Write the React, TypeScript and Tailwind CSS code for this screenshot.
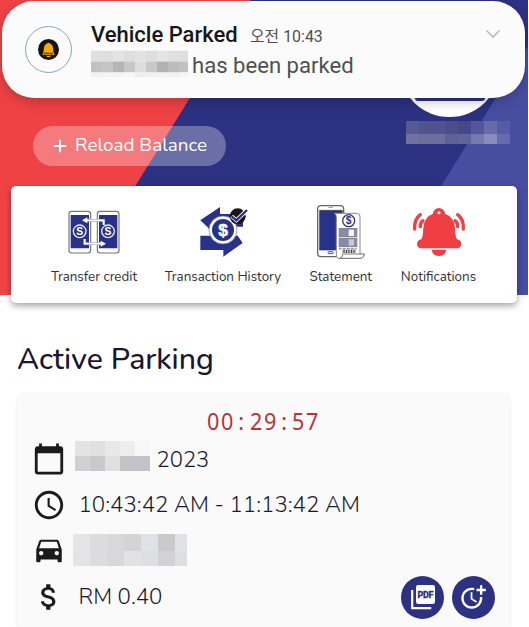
import type { ReactNode } from 'react';
import { MdAttachMoney, MdCalendarToday, MdDriveEta, MdMoreTime, MdSchedule } from 'react-icons/md';

function TransferIcon() {
  return (
    <svg width="52" height="44" viewBox="83 45 156 132" fill="none">
      <rect x="86" y="49" width="65" height="125" rx="8" fill="#fff" stroke="#777" strokeWidth="3.5" />
      <rect x="171" y="49" width="65" height="125" rx="8" fill="#fff" stroke="#777" strokeWidth="3.5" />
      <path d="M91 60h55v100H91zM176 60h55v100h-55z" fill="#29328a" />
      <g stroke="#e8eaf6" strokeWidth="4" fill="#29328a">
        <circle cx="118" cy="109" r="19" />
        <circle cx="203" cy="109" r="19" />
      </g>
      <g fill="#fff" fontFamily="Liberation Sans" fontWeight="700" fontSize="31" textAnchor="middle">
        <text x="118" y="120">S</text>
        <text x="203" y="120">S</text>
      </g>
      <path d="M190 90V76H136M133 132v14h54" stroke="#8d92bd" strokeWidth="8" />
      <path d="M190 90V76H136M133 132v14h54" stroke="#fff" strokeWidth="5" />
      <path d="M125 76l16-9v18zM197 146l-16-9v18z" fill="#fff" />
    </svg>
  );
}

function HistoryIcon() {
  return (
    <svg className="translate-x-px" width="50" height="52" viewBox="120 34 150 156" fill="none">
      <path d="M124 77L183 37v21h69v38h-35l-50 22z" fill="#29328a" />
      <path d="M124 77h23v24h16V60z" fill="#29328a" />
      <path d="M124 123h112l15 22-58 41v-20h-69z" fill="#29328a" />
      <circle cx="192" cy="106" r="42" fill="#fff" stroke="#6b70a8" strokeWidth="2" />
      <circle cx="192" cy="106" r="33" fill="#29328a" />
      <text x="192" y="124" fill="#fff" stroke="#fff" strokeWidth="1.500" fontFamily="Liberation Sans" fontWeight="700" fontSize="52" textAnchor="middle">$</text>
      <circle cx="236" cy="65" r="24" fill="#171717" />
      <path d="M218 65l14 12 32-31" stroke="#fff" strokeWidth="12" />
      <path d="M218 65l14 12 32-31" stroke="#29328a" strokeWidth="7" />
    </svg>
  );
}

function StatementIcon() {
  return (
    <svg width="50" height="56" viewBox="79 27 150 168" fill="none">
      <rect x="84" y="32" width="78" height="153" rx="10" fill="#fff" stroke="#666" strokeWidth="4" />
      <path d="M90 46h68v119H90z" fill="#29328a" stroke="#333" strokeWidth="2" />
      <path d="M116 37h14" stroke="#999" strokeWidth="3" />
      <rect x="115" y="170" width="16" height="6" rx="3" stroke="#555" strokeWidth="3" />
      <path d="M133 55h70q8 1 8 10v113h13q-2 12-13 12h-65q-8-2-6-16V65q0-8-7-10z" fill="#fff" stroke="#888" strokeWidth="3" />
      <circle cx="177" cy="77" r="18" stroke="#29328a" strokeWidth="4" />
      <text x="177" y="88" fill="#29328a" fontFamily="Liberation Sans" fontWeight="700" fontSize="31" textAnchor="middle">$</text>
      <path d="M147 101h56v23h-56zM147 131h56v23h-56z" fill="#858aae" />
      <path d="M147 101h56M147 125h56M147 130h56M147 154h56" stroke="#777" strokeWidth="3" />
      <path d="M177 104h16v19h-16z" fill="#f5f5f5" />
      <path d="M177 133h16v19h-16z" fill="#c7cada" />
      <path d="M147 161h54" stroke="#999" strokeWidth="5" strokeDasharray="9 3" />
      <path d="M159 169h39" stroke="#444" strokeWidth="10" strokeDasharray="3 2" />
      <path d="M159 177h65q-2 13-13 13h-61q10-1 9-13z" fill="#fff" stroke="#777" strokeWidth="3" />
    </svg>
  );
}

function AlertBellIcon() {
  return (
    <svg width="54" height="50" viewBox="65 33 162 150" fill="none">
      <path
        d="M128 53a18 17 0 0 1 36 0q28 10 30 43c1 14 1 25 6 34a13.500 13.500 0 0 1-1 27H94a13.500 13.500 0 0 1-1-27c5-9 5-20 6-34q2-33 29-43z"
        fill="#ef3f43"
      />
      <circle cx="146" cy="50" r="4.500" fill="#fff" />
      <path d="M124 161h44q-3 19-22 19t-22-19z" fill="#ef3f43" />
      <g stroke="#ef3f43" strokeWidth="10" strokeLinecap="round">
        <path d="M90 56q-19 14-17 43M98 74q-9 7-8 18M202 56q19 14 17 43M194 74q9 7 8 18" />
      </g>
    </svg>
  );
}

function PdfIcon() {
  return (
    <svg width="26" height="26" viewBox="0 0 26 26" fill="none">
      <path d="M2.200 6v18.200h19" stroke="#fff" strokeWidth="2.200" />
      <rect x="6" y="1" width="19" height="19" rx="2.200" fill="#fff" />
      <text x="15.500" y="13.700" fill="#2c3182" stroke="#2c3182" strokeWidth="0.3" fontFamily="Roboto" fontWeight="800" fontSize="9" textAnchor="middle" textLength="16">PDF</text>
    </svg>
  );
}

const actions = [
  { label: 'Transfer credit', icon: <TransferIcon />, width: 'w-[86px]' },
  { label: 'Transaction History', icon: <HistoryIcon />, width: 'w-[116px]' },
  { label: 'Statement', icon: <StatementIcon />, width: 'w-[63.500px]' },
  { label: 'Notifications', icon: <AlertBellIcon />, width: 'w-[76px]' },
];

const messageMask = [
  'bg-[#e0e0e0]', 'bg-[#dedede]', 'bg-[#e3e3e3]', 'bg-[#dedede]', 'bg-[#e2e2e2]', 'bg-[#dedede]', 'bg-[#e5e5e5]', 'bg-[#e0e0e0]', 'bg-[#dedede]',
  'bg-[#c2c2c2]', 'bg-[#c5c5c5]', 'bg-[#b5b5b5]', 'bg-[#c7c7c7]', 'bg-[#dddddd]', 'bg-[#c8c8c8]', 'bg-[#b2b2b2]', 'bg-[#bcbcbc]', 'bg-[#c2c2c2]',
  'bg-[#f2f2f2]', 'bg-[#f4f4f4]', 'bg-[#f4f4f4]', 'bg-[#f8f8f8]', 'bg-[#ededed]', 'bg-[#f1f1f1]', 'bg-[#f4f4f4]', 'bg-[#f2f2f2]', 'bg-[#f7f7f7]',
];
const nameMask = [
  'bg-[#565a94]', 'bg-[#505390]', 'bg-[#505390]', 'bg-[#4b4d8c]', 'bg-[#444789]', 'bg-[#52569b]', 'bg-[#666cab]', 'bg-[#555ba5]',
  'bg-[#7071a0]', 'bg-[#6d6e9e]', 'bg-[#6d6e9e]', 'bg-[#5e6096]', 'bg-[#61649b]', 'bg-[#737aaf]', 'bg-[#878cba]', 'bg-[#646bae]',
];
const dateMask = [
  'bg-[#e3e3e4]', 'bg-[#e0e0e1]', 'bg-[#e8e8e8]', 'bg-[#ededed]', 'bg-[#f7f7f7]',
  'bg-[#d1d1d3]', 'bg-[#c9c9cb]', 'bg-[#e0e0e2]', 'bg-[#c3c2c9]', 'bg-[#c3c2c9]',
];
const plateMask = [
  'bg-[#e5e5e5]', 'bg-[#dcdcdf]', 'bg-[#d9d9dc]', 'bg-[#d4d4d6]', 'bg-[#e0e1e4]', 'bg-[#cacacd]', 'bg-[#e2e2e5]',
  'bg-[#e3e4e6]', 'bg-[#dcdcdf]', 'bg-[#d8d8db]', 'bg-[#e2e2e2]', 'bg-[#dedfe1]', 'bg-[#d2d2d4]', 'bg-[#dedfe1]',
];

function Mask({ cells, className }: { cells: string[]; className: string }) {
  return (
    <div className={`grid shrink-0 overflow-hidden ${className}`}>
      {cells.map((color, i) => (
        <div key={i} className={color} />
      ))}
    </div>
  );
}

function DetailRow({ icon, children }: { icon: ReactNode; children: ReactNode }) {
  return (
    <div className="flex h-[46px] items-center">
      <div className="w-[34px] shrink-0 text-[34px] text-[#1b1b1b]">{icon}</div>
      {children}
    </div>
  );
}

function Toast() {
  return (
    <div className="absolute top-px left-[2px] flex h-[97px] w-[523px] rounded-[32px] bg-[#fbfbfb] shadow-[0_4px_12px_rgba(0,0,0,0.22)]">
      <div className="mt-[25px] ml-[23px] flex size-[47px] shrink-0 items-center justify-center rounded-full border border-[#8fa5b5]">
        <div className="flex size-[21px] items-center justify-center rounded-full bg-[#151515]">
          <svg width="13" height="16" viewBox="0 0 13 16">
            <path d="M5 1.500q1.500-1.600 3 0 2.700 1 3 4l.6 5 1.200 2.300H.2L1.400 10.500l.6-5q.3-3 3-4z" fill="#f5ab0c" />
            <path d="M2 11.200h9M4 13.500h5" stroke="#3b2a00" strokeWidth="1" />
            <path d="M4 14h5q-2.500 2.500-5 0z" fill="#f5ab0c" />
          </svg>
        </div>
      </div>
      <div className="mt-[19px] ml-[19px] grow font-['Roboto','Noto_Sans_CJK_KR',sans-serif]">
        <div className="flex h-[30px] items-baseline">
          <h1 className="w-[159px] text-[22px] leading-[30px] font-medium whitespace-nowrap text-[#171717]">Vehicle Parked</h1>
          <span className="text-[15.900px] whitespace-nowrap text-[#505050]">오전 10:43</span>
        </div>
        <div className="flex h-[30px] items-center">
          <Mask cells={messageMask} className="h-[27px] w-[97px] grid-cols-[repeat(8,11px)_9px] grid-rows-[11px_11px_5px] -translate-y-[1.500px]" />
          <span className="mt-[2px] ml-1 text-[22.100px] whitespace-nowrap text-[#505050]">has been parked</span>
        </div>
      </div>
      <svg className="mt-[28px] mr-[24px]" width="16" height="10" viewBox="0 0 16 10" fill="none">
        <path d="M1.500 1.500L8 8l6.500-6.500" stroke="#bdbdbd" strokeWidth="1.700" />
      </svg>
    </div>
  );
}

export default function App() {
  return (
    <div className="relative h-[627px] w-[529px] overflow-hidden bg-white font-['Nunito','Lato',sans-serif] text-[#17172f]">
      <header className="flex h-[295px] w-[528px] justify-between bg-[linear-gradient(121.8deg,#ef4245_212.500px,#2c3182_213.500px,#2c3182_472.500px,#474ea1_473.500px)]">
        <button className="mt-[125.500px] ml-[32.500px] flex h-10 w-[193px] items-center rounded-full bg-white/30 pl-[20.500px] text-[18.900px] whitespace-nowrap text-white">
          <svg className="mr-2" width="14" height="14" viewBox="0 0 14 14">
            <path d="M7 .7v12.600M.7 7h12.600" stroke="#fff" strokeWidth="1.900" />
          </svg>
          Reload Balance
        </button>
        <div className="mr-[18px] flex w-[104px] flex-col pt-4">
          <div className="ml-[-7px] flex size-[101px] shrink-0 justify-center rounded-full bg-white pt-9">
            <div className="h-[49px] w-[70px] rounded-[3px] bg-[#2c3182]" />
          </div>
          <Mask cells={nameMask} className="mt-1 h-[23px] w-[104px] grid-cols-8 grid-rows-[13px_10px]" />
        </div>
      </header>

      <nav className="relative mt-[-109px] ml-[11px] flex h-[117px] w-[506px] gap-7 rounded-[5px] bg-white pl-10 shadow-[0_3px_6px_rgba(0,0,0,0.35)]">
        {actions.map(({ label, icon, width }) => (
          <button key={label} className={`flex flex-col items-center pt-[17px] ${width}`}>
            <div className="flex h-[58px] items-center">{icon}</div>
            <span className="mt-[6px] text-[13.400px] leading-5 whitespace-nowrap text-[#303039]">{label}</span>
          </button>
        ))}
      </nav>

      <main className="px-[17px]">
        <h2 className="mt-[36px] h-[55px] text-[30.200px] leading-[40px] font-medium whitespace-nowrap">Active Parking</h2>
        <section className="h-[240px] w-[493px] rounded-lg bg-[#fafafa] pl-[15px] shadow-[0_0_3px_rgba(0,0,0,0.1)]">
          <div className="flex h-[42px] items-center pt-[11px] pl-[174px] font-['Noto_Sans',sans-serif] text-[24px] text-[#b93436]">
            {'00:29:57'.split('').map((char, i) => (
              <span key={i} className="w-[14.200px] scale-x-90 text-center">{char}</span>
            ))}
          </div>
          <DetailRow icon={<MdCalendarToday />}>
            <Mask cells={dateMask} className="ml-[9px] h-[30px] w-[75px] grid-cols-5 grid-rows-2 -translate-y-[3px]" />
            <span className="mt-[2px] ml-[6.500px] text-[22px] font-[350]">2023</span>
          </DetailRow>
          <DetailRow icon={<MdSchedule />}>
            <span className="mt-[2px] ml-[12.500px] text-[22.250px] font-[350] whitespace-nowrap">10:43:42 AM - 11:13:42 AM</span>
          </DetailRow>
          <DetailRow icon={<MdDriveEta />}>
            <Mask cells={plateMask} className="ml-[7px] h-[32px] w-[114px] grid-cols-[repeat(6,17px)_12px] grid-rows-[17px_15px] -translate-y-px" />
          </DetailRow>
          <DetailRow icon={<MdAttachMoney />}>
            <span className="mt-[2px] ml-[12.500px] w-[322.500px] text-[22.200px] font-[350]">RM 0.40</span>
            <button className="flex size-[43px] shrink-0 items-center justify-center rounded-full bg-[#2c3182]">
              <PdfIcon />
            </button>
            <button className="ml-[7.500px] flex size-[43px] shrink-0 items-center justify-center rounded-full bg-[#2c3182] text-[28px] text-white">
              <MdMoreTime />
            </button>
          </DetailRow>
        </section>
      </main>

      <Toast />
    </div>
  );
}
